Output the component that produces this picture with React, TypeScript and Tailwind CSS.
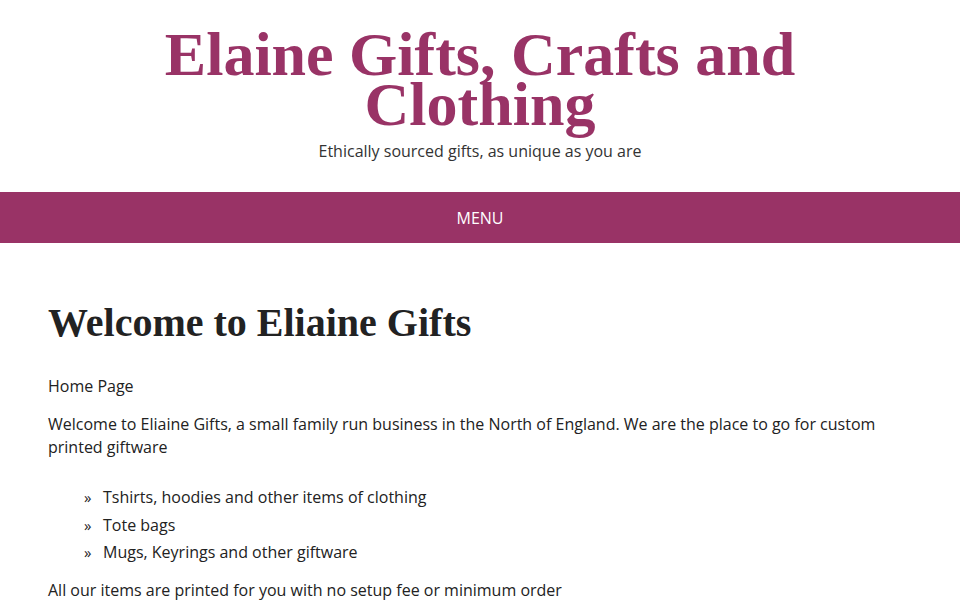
import React from "react";

export default function App() {
  const serif = { fontFamily: '"Liberation Serif", "DejaVu Serif", serif' };
  return (
    <div className="min-h-[600px] bg-white text-[#222]" style={{ fontFamily: '"Open Sans", sans-serif' }}>
      <header className="pt-[29px] pb-[29px] text-center">
        <h1 className="text-[62px] leading-[50px] font-bold text-[#993366] mx-auto max-w-[700px]" style={serif}>
          Elaine Gifts, Crafts and Clothing
        </h1>
        <p className="mt-[10px] text-[16px] leading-[24px] text-[#333]">Ethically sourced gifts, as unique as you are</p>
      </header>
      <nav className="h-[51px] bg-[#993366] flex items-center justify-center">
        <span className="text-white text-[16px]">MENU</span>
      </nav>
      <main className="px-[48px] pt-[56px]">
        <h2 className="text-[40px] leading-[48px] font-bold text-[#222] mb-[28px]" style={serif}>Welcome to Eliaine Gifts</h2>
        <p className="text-[16px] leading-[23px] mb-[15px]">Home Page</p>
        <p className="text-[16px] leading-[23px] mb-[25px] max-w-[864px]">
          Welcome to Eliaine Gifts, a small family run business in the North of England. We are the place to go for custom printed giftware
        </p>
        <ul className="pl-[36px] mb-[12px]">
          {["Tshirts, hoodies and other items of clothing", "Tote bags", "Mugs, Keyrings and other giftware"].map((t) => (
            <li key={t} className="flex text-[16px] leading-[27.5px]">
              <span className="w-[19px] text-[15px]">»</span>
              <span>{t}</span>
            </li>
          ))}
        </ul>
        <p className="text-[16px] leading-[23px]">All our items are printed for you with no setup fee or minimum order</p>
      </main>
    </div>
  );
}
